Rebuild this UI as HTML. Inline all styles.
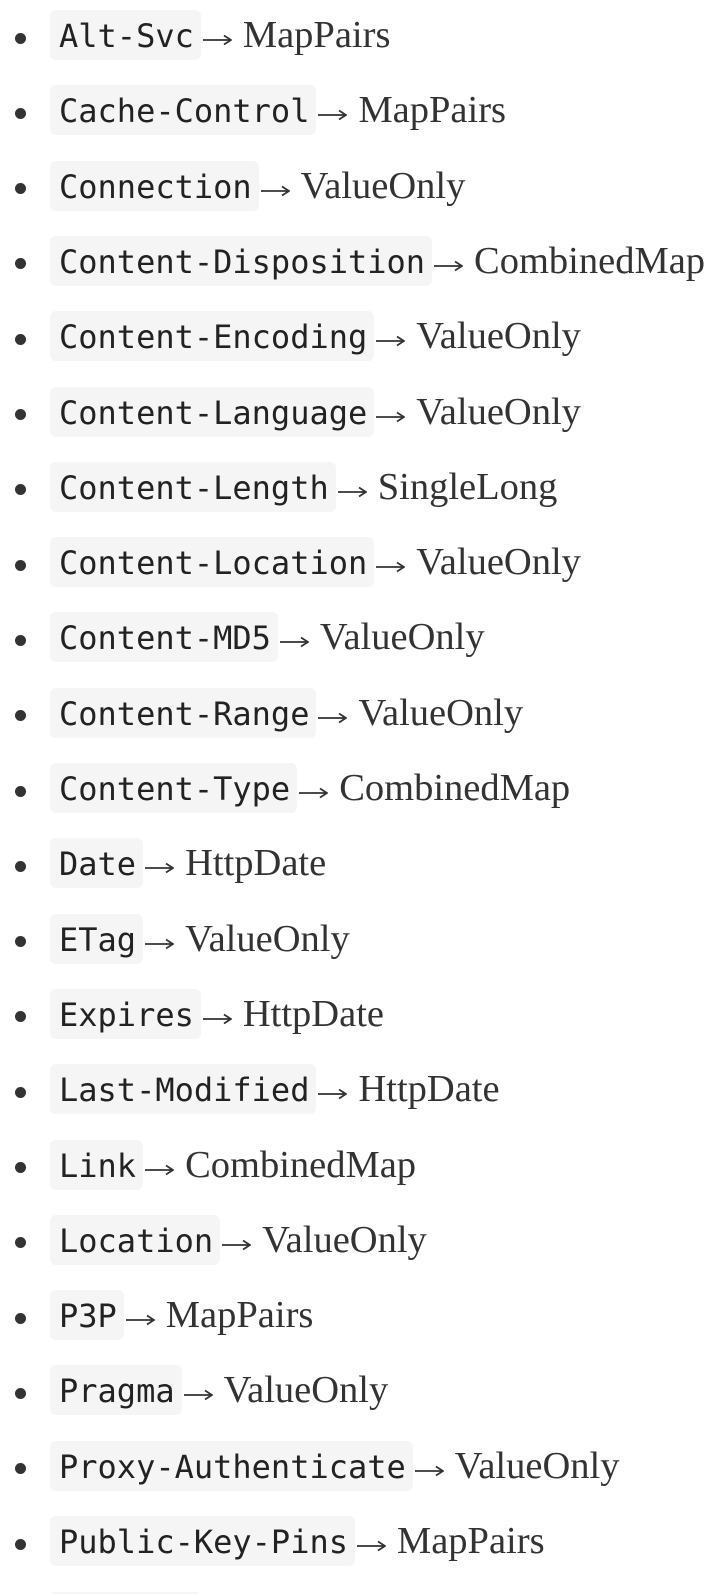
<!DOCTYPE html>
<html><head><meta charset="utf-8"><style>
html,body{margin:0;padding:0;background:#fff;width:722px;height:1594px;overflow:hidden}
#wrap{position:relative;width:722px;height:1594px;overflow:hidden}
ul{margin:0;padding:0;list-style:none}
li{position:absolute;left:0;width:722px;height:75px;margin:0;padding:0}
.b{position:absolute;left:14.5px;top:32.5px;width:11px;height:11px;border-radius:50%;background:#333}
.row{position:absolute;left:50px;top:10px;height:50px;display:flex;align-items:baseline;white-space:nowrap}
code{display:inline-block;height:50px;line-height:48px;padding:2px 7px 0 9px;background:#f5f5f5;border-radius:6px;font-family:"DejaVu Sans Mono","Liberation Mono",monospace;font-size:32px;color:#222;box-sizing:border-box}
.a{display:inline-block;width:30px;height:14px;margin:0 11px 5px 1px}
.t{font-family:"Liberation Serif",serif;font-size:38.5px;color:#333}
</style></head><body>
<div id="wrap">
<svg width="0" height="0" style="position:absolute"><defs><symbol id="ar" viewBox="0 0 30 14"><path d="M1 7H29M22 2.5L29 7L22 11.5" fill="none" stroke="#333" stroke-width="1.8"/></symbol></defs></svg>
<ul>
<li style="top:0px"><div class="b"></div><div class="row"><code>Alt-Svc</code><svg class="a"><use href="#ar"/></svg><span class="t">MapPairs</span></div></li>
<li style="top:75.3px"><div class="b"></div><div class="row"><code>Cache-Control</code><svg class="a"><use href="#ar"/></svg><span class="t">MapPairs</span></div></li>
<li style="top:150.6px"><div class="b"></div><div class="row"><code>Connection</code><svg class="a"><use href="#ar"/></svg><span class="t">ValueOnly</span></div></li>
<li style="top:225.9px"><div class="b"></div><div class="row"><code>Content-Disposition</code><svg class="a"><use href="#ar"/></svg><span class="t">CombinedMap</span></div></li>
<li style="top:301.2px"><div class="b"></div><div class="row"><code>Content-Encoding</code><svg class="a"><use href="#ar"/></svg><span class="t">ValueOnly</span></div></li>
<li style="top:376.5px"><div class="b"></div><div class="row"><code>Content-Language</code><svg class="a"><use href="#ar"/></svg><span class="t">ValueOnly</span></div></li>
<li style="top:451.8px"><div class="b"></div><div class="row"><code>Content-Length</code><svg class="a"><use href="#ar"/></svg><span class="t">SingleLong</span></div></li>
<li style="top:527.1px"><div class="b"></div><div class="row"><code>Content-Location</code><svg class="a"><use href="#ar"/></svg><span class="t">ValueOnly</span></div></li>
<li style="top:602.4px"><div class="b"></div><div class="row"><code>Content-MD5</code><svg class="a"><use href="#ar"/></svg><span class="t">ValueOnly</span></div></li>
<li style="top:677.7px"><div class="b"></div><div class="row"><code>Content-Range</code><svg class="a"><use href="#ar"/></svg><span class="t">ValueOnly</span></div></li>
<li style="top:753px"><div class="b"></div><div class="row"><code>Content-Type</code><svg class="a"><use href="#ar"/></svg><span class="t">CombinedMap</span></div></li>
<li style="top:828.3px"><div class="b"></div><div class="row"><code>Date</code><svg class="a"><use href="#ar"/></svg><span class="t">HttpDate</span></div></li>
<li style="top:903.6px"><div class="b"></div><div class="row"><code>ETag</code><svg class="a"><use href="#ar"/></svg><span class="t">ValueOnly</span></div></li>
<li style="top:978.9px"><div class="b"></div><div class="row"><code>Expires</code><svg class="a"><use href="#ar"/></svg><span class="t">HttpDate</span></div></li>
<li style="top:1054.2px"><div class="b"></div><div class="row"><code>Last-Modified</code><svg class="a"><use href="#ar"/></svg><span class="t">HttpDate</span></div></li>
<li style="top:1129.5px"><div class="b"></div><div class="row"><code>Link</code><svg class="a"><use href="#ar"/></svg><span class="t">CombinedMap</span></div></li>
<li style="top:1204.8px"><div class="b"></div><div class="row"><code>Location</code><svg class="a"><use href="#ar"/></svg><span class="t">ValueOnly</span></div></li>
<li style="top:1280.1px"><div class="b"></div><div class="row"><code>P3P</code><svg class="a"><use href="#ar"/></svg><span class="t">MapPairs</span></div></li>
<li style="top:1355.4px"><div class="b"></div><div class="row"><code>Pragma</code><svg class="a"><use href="#ar"/></svg><span class="t">ValueOnly</span></div></li>
<li style="top:1430.7px"><div class="b"></div><div class="row"><code>Proxy-Authenticate</code><svg class="a"><use href="#ar"/></svg><span class="t">ValueOnly</span></div></li>
<li style="top:1506px"><div class="b"></div><div class="row"><code>Public-Key-Pins</code><svg class="a"><use href="#ar"/></svg><span class="t">MapPairs</span></div></li>
<li style="top:1582px"><div class="b"></div><div class="row"><code>Refresh</code><svg class="a"><use href="#ar"/></svg><span class="t">ValueOnly</span></div></li>
</ul>
</div>
</body></html>
